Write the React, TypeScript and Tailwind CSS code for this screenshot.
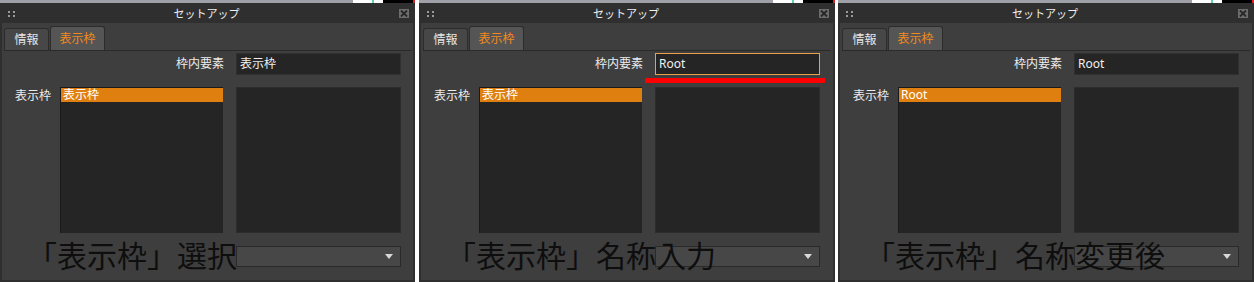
import React from "react";

const FONT = { fontFamily: '"Noto Sans", "Noto Sans CJK JP", sans-serif' };

type PanelProps = {
  width: number;
  inputValue: string;
  focused?: boolean;
  listItem: string;
  caption: string;
  redBar?: boolean;
};

function Panel({ width, inputValue, focused, listItem, caption, redBar }: PanelProps) {
  return (
    <div className="relative flex h-[282px] flex-col shrink-0" style={{ width }}>
      {/* desktop strip behind window */}
      <div className="flex h-[3px] w-full">
        <div className="flex-1 bg-[#9fa0a8]" />
        <div className="flex w-[30px] bg-white">
          <div className="ml-[19px] h-full w-[2px] bg-[#5fd0b0]" />
        </div>
        <div className="flex w-[32px] justify-end bg-black">
          <div className="h-full w-[2px] bg-[#e02020]" />
        </div>
      </div>
      {/* title bar */}
      <div className="relative flex h-[20px] items-center justify-center bg-[#2f2f2f] pr-[2px]">
        <div className="absolute left-[8px] top-[8px] grid grid-cols-2 gap-x-[3px] gap-y-[2px]">
          <div className="h-[2px] w-[2px] bg-[#9a9a9a]" />
          <div className="h-[2px] w-[2px] bg-[#9a9a9a]" />
          <div className="h-[2px] w-[2px] bg-[#9a9a9a]" />
          <div className="h-[2px] w-[2px] bg-[#9a9a9a]" />
        </div>
        <span className="mt-[1px] text-[11px] leading-none text-[#f0f0f0]">セットアップ</span>
        <div className="absolute right-[6px] top-[6px] flex h-[9px] w-[10px] items-center justify-center bg-[#6c6c6c]">
          <svg width="8" height="7" viewBox="0 0 8 7">
            <path d="M1 0.5 L7 6.5 M7 0.5 L1 6.5" stroke="#262626" strokeWidth="1.8" />
          </svg>
        </div>
      </div>
      {/* body */}
      <div className="flex flex-1 flex-col border-x-2 border-b-2 border-[#2f2f2f] bg-[#3e3e3e]">
        {/* tabs */}
        <div className="ml-[2px] flex h-[28px] w-[408px] items-end border-b border-[#2a2a2a]">
          <div className="flex h-[22px] w-[45px] items-center justify-center rounded-t-[3px] border border-b-0 border-[#2c2c2c] bg-[#474747] text-[12px] text-[#e6e6e6]">
            情報
          </div>
          <div className="ml-[1px] flex h-[24px] w-[55px] items-center justify-center rounded-t-[3px] border border-b-0 border-[#2c2c2c] bg-[#555555] text-[12px] text-[#f28a1c]">
            表示枠
          </div>
        </div>
        {/* 枠内要素 row */}
        <div className="mt-[2px] flex h-[22px] items-center">
          <div className="w-[222px] text-right text-[12px] text-[#ececec]">枠内要素</div>
          <div
            className={`ml-[12px] flex h-[22px] w-[165px] items-center border bg-[#252525] pl-[3px] text-[12px] text-[#f0f0f0] ${
              focused ? "border-[#e8a04c]" : "border-[#303030]"
            }`}
          >
            {inputValue}
          </div>
        </div>
        {/* lists */}
        <div className="mt-[12px] flex">
          <div className="w-[58px] pl-[13px] pt-[2px] text-[12px] leading-[14px] text-[#ececec]">表示枠</div>
          <div className="h-[146px] w-[163px] border-l border-t border-[#1a1a1a] bg-[#252525]">
            <div className="flex h-[14px] items-center bg-[#df7f10] pl-[2px] text-[12px] text-white">
              {listItem}
            </div>
          </div>
          <div className="ml-[13px] h-[146px] w-[165px] border border-[#2c2c2c] bg-[#252525]" />
        </div>
        {/* dropdown */}
        <div className="ml-[234px] mt-[13px] flex h-[21px] w-[165px] items-center justify-end border border-[#2a2a2a] bg-[#474747] pr-[7px]">
          <svg width="8" height="5" viewBox="0 0 8 5">
            <path d="M0 0 L8 0 L4 5 Z" fill="#d8d8d8" />
          </svg>
        </div>
      </div>
      {redBar && <div className="absolute left-[226px] top-[78px] h-[5px] w-[180px] bg-[#ff0000]" />}
      <div className="pointer-events-none absolute left-[27px] top-[241px] whitespace-nowrap text-[30px] leading-[30px] text-[#0e0e0e]">
        {caption}
      </div>
    </div>
  );
}

export default function App() {
  return (
    <div className="flex h-[282px] w-[1254px] overflow-hidden bg-white" style={FONT}>
      <Panel width={415} inputValue="表示枠" listItem="表示枠" caption="「表示枠」選択" />
      <div className="w-[4px] shrink-0" />
      <Panel width={416} inputValue="Root" focused listItem="表示枠" caption="「表示枠」名称入力" redBar />
      <div className="w-[3px] shrink-0" />
      <Panel width={416} inputValue="Root" listItem="Root" caption="「表示枠」名称変更後" />
    </div>
  );
}
